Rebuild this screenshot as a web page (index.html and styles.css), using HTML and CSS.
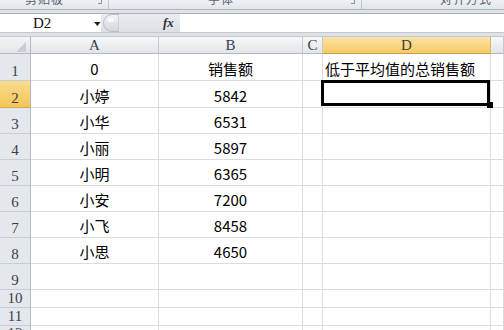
FILE: index.html
```html
<!DOCTYPE html>
<html lang="zh-CN">
<head>
    <meta charset="UTF-8">
    <title>销售额</title>
    <link rel="stylesheet" href="styles.css">
</head>
<body>
    <div id="ribbon">
        <div class="group g1"><span class="label">剪贴板</span><span class="launch"></span></div>
        <div class="group g2"><span class="label">字体</span><span class="launch"></span></div>
        <div class="group g3"><span class="label">对齐方式</span></div>
    </div>

    <div id="fbar">
        <div class="namebox">
            <span>D2</span>
            <svg class="arrow" width="7" height="4" viewBox="0 0 7 4"><path d="M0 0H7L3.5 4Z" fill="#222"/></svg>
        </div>
        <div class="tools">
            <svg class="splitter" width="16" height="18" viewBox="0 0 16 18">
                <defs>
                    <linearGradient id="sg" x1="0" y1="0" x2="0" y2="1">
                        <stop offset="0" stop-color="#f4f5f7"/>
                        <stop offset="1" stop-color="#d2d6db"/>
                    </linearGradient>
                </defs>
                <path d="M16 0.5H9A8.5 8.5 0 0 0 9 17.5H16Z" fill="url(#sg)" stroke="#b9bec5"/>
                <ellipse cx="8" cy="6" rx="3" ry="2" fill="#fff" opacity="0.8"/>
            </svg>
            <span class="fx">fx</span>
        </div>
        <div class="finput"></div>
    </div>

    <div id="sheet">
        <div class="corner">
            <svg width="10" height="10" viewBox="0 0 10 10"><path d="M10 0V10H0Z" fill="#c9cdd2"/></svg>
        </div>
        <div class="ch">A</div>
        <div class="ch">B</div>
        <div class="ch">C</div>
        <div class="ch sel">D</div>
        <div class="ch"></div>

        <div class="rh">1</div>
        <div class="c mid">0</div>
        <div class="c mid">销售额</div>
        <div class="c"></div>
        <div class="c left">低于平均值的总销售额</div>
        <div class="c"></div>

        <div class="rh sel">2</div>
        <div class="c mid">小婷</div>
        <div class="c mid">5842</div>
        <div class="c"></div>
        <div class="c active"></div>
        <div class="c"></div>

        <div class="rh">3</div>
        <div class="c mid">小华</div>
        <div class="c mid">6531</div>
        <div class="c"></div><div class="c"></div><div class="c"></div>

        <div class="rh">4</div>
        <div class="c mid">小丽</div>
        <div class="c mid">5897</div>
        <div class="c"></div><div class="c"></div><div class="c"></div>

        <div class="rh">5</div>
        <div class="c mid">小明</div>
        <div class="c mid">6365</div>
        <div class="c"></div><div class="c"></div><div class="c"></div>

        <div class="rh">6</div>
        <div class="c mid">小安</div>
        <div class="c mid">7200</div>
        <div class="c"></div><div class="c"></div><div class="c"></div>

        <div class="rh">7</div>
        <div class="c mid">小飞</div>
        <div class="c mid">8458</div>
        <div class="c"></div><div class="c"></div><div class="c"></div>

        <div class="rh">8</div>
        <div class="c mid">小思</div>
        <div class="c mid">4650</div>
        <div class="c"></div><div class="c"></div><div class="c"></div>

        <div class="rh">9</div>
        <div class="c"></div><div class="c"></div><div class="c"></div><div class="c"></div><div class="c"></div>

        <div class="rh">10</div>
        <div class="c"></div><div class="c"></div><div class="c"></div><div class="c"></div><div class="c"></div>

        <div class="rh">11</div>
        <div class="c"></div><div class="c"></div><div class="c"></div><div class="c"></div><div class="c"></div>

        <div class="rh">12</div>
        <div class="c"></div><div class="c"></div><div class="c"></div><div class="c"></div><div class="c"></div>
    </div>
</body>
</html>
```

FILE: styles.css
```css
body{
    margin: 0;
    width: 504px;
    height: 330px;
    overflow: hidden;
    background-color: #dfe3e8;
    font-family: "Noto Sans CJK SC", sans-serif;
}

/* 리본 아래쪽 (잘려서 라벨 아랫부분만 보임) */
#ribbon{
    display: flex;
    height: 9px;
    overflow: hidden;
    background: linear-gradient(#eef0f3, #e2e6eb);
    border-bottom: 1px solid #aeb4bc;
    margin-bottom: 3px;
}
.group{
    display: flex;
    align-items: flex-start;
    border-right: 1px solid #c3c8ce;
    box-sizing: border-box;
    position: relative;
}
.g1{ width: 109px; padding-left: 25px; }
.g2{ width: 253px; padding-left: 99px; }
.g3{ flex: 1; padding-left: 78px; border-right: none; }
.label{
    font-size: 12px;
    line-height: 12px;
    margin-top: -7px;
    color: #5d6269;
    letter-spacing: 1px;
}
.launch{
    position: absolute;
    right: 6px;
    top: 0;
    width: 3px;
    height: 3px;
    border-right: 1px solid #8e959d;
    border-bottom: 1px solid #8e959d;
}

/* 이름 상자 + 수식 입력줄 */
#fbar{
    display: flex;
    height: 18px;
    border-top: 1px solid #a9b0b8;
    border-bottom: 1px solid #c2c7cd;
    margin-bottom: 3px;
}
.namebox{
    width: 101px;
    background-color: #fff;
    display: flex;
    align-items: center;
    padding-left: 33px;
    box-sizing: border-box;
    font-family: "Liberation Serif", serif;
    font-size: 15px;
    color: #111;
}
.namebox .arrow{
    margin-left: 43px;
    margin-top: 1px;
}
.tools{
    width: 79px;
    display: flex;
    align-items: center;
    background: linear-gradient(#e9ecf0, #dde1e6);
}
.splitter{
    margin-left: 2px;
}
.fx{
    margin-left: 44px;
    font-family: "Liberation Serif", serif;
    font-style: italic;
    font-weight: bold;
    font-size: 13px;
    color: #333;
}
.finput{
    flex: 1;
    background-color: #fff;
}

/* 시트 */
#sheet{
    display: grid;
    grid-template-columns: 31px 128px 144px 20px 168px 1fr;
    grid-template-rows: 17px 27px 27px repeat(7, 26px) 18px 18px 1fr;
    height: 293px;
    border-top: 1px solid #c3c8ce;
    background-color: #fff;
}
#sheet > div{
    box-sizing: border-box;
}
.corner{
    background: linear-gradient(#f3f4f6, #e2e5e9);
    border-right: 1px solid #b3b9c0;
    border-bottom: 1px solid #b3b9c0;
    display: flex;
    align-items: flex-end;
    justify-content: flex-end;
    padding: 0 4px 1px 0;
}
.ch{
    background: linear-gradient(#f6f7f9, #e2e6ea);
    border-right: 1px solid #c5cad0;
    border-bottom: 1px solid #b3b9c0;
    display: flex;
    justify-content: center;
    align-items: flex-end;
    font-family: "Liberation Serif", serif;
    font-size: 15px;
    line-height: 14px;
    color: #3a3f45;
    padding-bottom: 1px;
}
.ch.sel{
    background: linear-gradient(#fbe4aa, #f6cb62);
    border-right-color: #e2b45c;
    border-bottom-color: #c99b4e;
}
.rh{
    background-color: #e4e8ed;
    border-right: 1px solid #b3b9c0;
    border-bottom: 1px solid #c8cdd3;
    display: flex;
    justify-content: center;
    align-items: flex-end;
    font-family: "Liberation Serif", serif;
    font-size: 15px;
    line-height: 14px;
    color: #3a3f45;
    padding-bottom: 2px;
}
.rh.sel{
    background: linear-gradient(#f9dc90, #f4c656);
    border-bottom-color: #dca44a;
}
.c{
    border-right: 1px solid #dadcde;
    border-bottom: 1px solid #dadcde;
    display: flex;
    align-items: center;
    font-size: 15px;
    color: #000;
    padding-top: 2px;
    white-space: nowrap;
}
.mid{
    justify-content: center;
}
.left{
    padding-left: 2px;
}
/* 선택된 셀 테두리와 채우기 핸들 */
.active{
    position: relative;
}
.active::before{
    content: "";
    position: absolute;
    left: -2px;
    top: -1px;
    right: 0;
    bottom: 1px;
    border: 3px solid #000;
    z-index: 2;
}
.active::after{
    content: "";
    position: absolute;
    right: -3px;
    bottom: -1px;
    width: 6px;
    height: 6px;
    background-color: #000;
    z-index: 3;
}
```
